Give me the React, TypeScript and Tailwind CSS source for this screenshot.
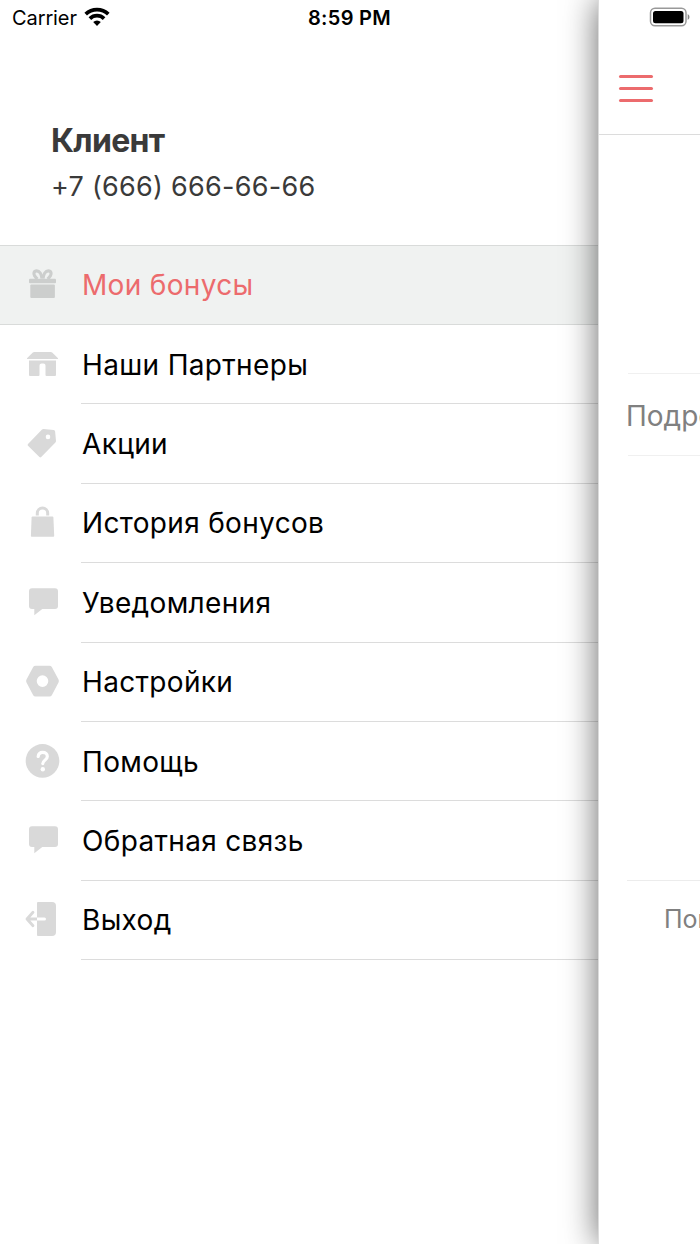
import React from "react";

interface MenuItem {
  id: string;
  label: string;
  icon: React.ReactNode;
}

const ChatIcon = () => (
  <path d="M8 3.3h23a3 3 0 0 1 3 3V21a3 3 0 0 1-3 3H18.3l-8 6.2V24H8a3 3 0 0 1-3-3V6.300a3 3 0 0 1 3-3z" />
);

const menuItems: MenuItem[] = [
  {
    id: "bonuses",
    label: "Мои бонусы",
    icon: (
      <>
        <g fill="none" stroke="currentColor" strokeWidth="3.200">
          <path d="M18 11.500C17.500 7.500 15.500 3.800 12.700 3.800C9.800 3.800 9.300 6.800 10.600 8.800C11.300 10 12 11 13.500 12" />
          <path d="M19 11.500C19.500 7.500 21.500 3.800 24.300 3.800C27.200 3.800 27.700 6.800 26.400 8.800C25.700 10 25 11 23.500 12" />
        </g>
        <rect x="5" y="11.700" width="27" height="4.600" rx="1" />
        <rect x="6.300" y="17.500" width="24.600" height="13.500" rx="1" />
      </>
    ),
  },
  {
    id: "partners",
    label: "Наши Партнеры",
    icon: (
      <>
        <path d="M10.200 5h16.600q.8 0 1.400.5L34 11.300v.7H3v-.7l5.800-5.800q.6-.5 1.400-.5z" />
        <path d="M5 13.500h27V28q0 1-1 1h-8.500q-1 0-1-1v-9.500q0-2-2-2h-2q-2 0-2 2V28q0 1-1 1H6q-1 0-1-1z" />
      </>
    ),
  },
  {
    id: "promo",
    label: "Акции",
    icon: (
      <path
        fillRule="evenodd"
        d="M19.500 3l10.200.9q1.300.1 1.400 1.400l.9 9.700q0 .8-.6 1.400L17.200 31q-.9.900-1.800 0L4 19.700q-.9-.9 0-1.800L18 3.600q.6-.6 1.500-.6zM24 8.600a2.300 2.300 0 1 0 0 4.600a2.300 2.300 0 0 0 0-4.600z"
      />
    ),
  },
  {
    id: "history",
    label: "История бонусов",
    icon: (
      <>
        <path
          d="M13.300 10.600V8.300a5.200 5.200 0 0 1 10.400 0v2.300"
          fill="none"
          stroke="currentColor"
          strokeWidth="3"
        />
        <path d="M8.500 11.600h20q.8 0 .9.900L30.200 31q0 .8-.8.8H7.700q-.8 0-.8-.8l.7-18.500q.1-.9.9-.9z" />
      </>
    ),
  },
  { id: "notifications", label: "Уведомления", icon: <ChatIcon /> },
  {
    id: "settings",
    label: "Настройки",
    icon: (
      <path
        fillRule="evenodd"
        d="M11.500 1.800h14q1.500 0 2.300 1.300l6.700 12.500q.8 1.500 0 3l-6.700 12.600q-.8 1.300-2.300 1.300h-14q-1.500 0-2.300-1.300L2.500 18.600q-.8-1.500 0-3L9.200 3.100q.8-1.300 2.300-1.300zM18.500 11.300a5.800 5.800 0 1 0 0 11.600a5.800 5.800 0 0 0 0-11.600z"
      />
    ),
  },
  {
    id: "help",
    label: "Помощь",
    icon: (
      <>
        <circle cx="18.500" cy="16.900" r="16.800" />
        <path
          d="M14.200 12.500c.3-2.600 2-4.100 4.500-4.100c2.700 0 4.600 1.600 4.600 4c0 3.600-4.500 3.800-4.500 7.200"
          fill="none"
          stroke="#fff"
          strokeWidth="3.200"
          strokeLinecap="round"
        />
        <circle cx="18.800" cy="25.200" r="2.200" fill="#fff" />
      </>
    ),
  },
  { id: "feedback", label: "Обратная связь", icon: <ChatIcon /> },
  {
    id: "logout",
    label: "Выход",
    icon: (
      <>
        <path d="M14 0h14a4 4 0 0 1 4 4v26a4 4 0 0 1-4 4H14q-1 0-1-1V1q0-1 1-1z" />
        <path
          d="M13 17H3M9 10.200L3 17l6 6.800"
          fill="none"
          stroke="currentColor"
          strokeWidth="2.800"
          strokeLinecap="round"
          strokeLinejoin="round"
        />
        <path d="M13 15.500h7.500a1.500 1.500 0 0 1 0 3H13z" fill="#fff" />
      </>
    ),
  },
];

const WifiIcon = () => (
  <svg className="w-[26px] h-[20px] mb-0.5" viewBox="0 0 26 20">
    <g fill="none" stroke="#000" strokeWidth="3.700">
      <path d="M1.700 7.200a16.300 16.300 0 0 1 22.600 0" />
      <path d="M5.900 11.600a10.200 10.200 0 0 1 14.200 0" />
    </g>
    <path d="M13 19l-3.800-3.900a5.400 5.400 0 0 1 7.600 0z" />
  </svg>
);

const BatteryIcon = () => (
  <svg className="w-[42px] h-[20px]" viewBox="0 0 42 20">
    <rect
      x="1.500"
      y="1.200"
      width="35.500"
      height="17.600"
      rx="4.500"
      fill="none"
      stroke="#999"
      strokeWidth="1.500"
    />
    <rect x="4" y="3.900" width="30.500" height="12.300" rx="2.500" />
    <path d="M38.700 7q1.800 1 1.800 3t-1.800 3z" fill="#888" />
  </svg>
);

const App = () => {
  return (
    <div className="flex w-[700px] h-[1244px] overflow-hidden bg-white font-['Inter','Liberation_Sans',sans-serif] text-black">
      {/* Drawer */}
      <aside className="w-[598px] shrink-0 flex flex-col">
        <div className="h-9 pl-3 flex items-center">
          <span className="w-[72px] text-[20px] leading-none tracking-[-0.1px]">
            Carrier
          </span>
          <WifiIcon />
          <span className="ml-[198px] text-[20px] leading-none font-semibold tracking-[0.3px] whitespace-nowrap">
            8:59 PM
          </span>
        </div>

        <div className="h-[209px] pl-[51px] pt-[85px] text-[#3a3a3a]">
          <h1 className="text-[32px] leading-10 font-bold tracking-[-0.7px]">
            Клиент
          </h1>
          <p className="mt-1.5 text-[27px] leading-10 tracking-[0.27px]">
            +7 (666) 666-66-66
          </p>
        </div>

        <nav className="flex flex-col">
          {menuItems.map((item, index) => (
            <div
              key={item.id}
              className={
                index === 0
                  ? "flex h-[80px] border-y border-[#d9dbda] bg-[#f0f2f1] text-[#ec6b6d]"
                  : "flex h-[79.4px]"
              }
            >
              <div className="w-[81px] pl-6 flex items-center shrink-0">
                <svg
                  className={
                    index === 0
                      ? "w-9 h-9 overflow-visible text-[#cccecd]"
                      : "w-9 h-9 overflow-visible text-[#d9d9d9]"
                  }
                  viewBox="0 0 36 36"
                  fill="currentColor"
                >
                  {item.icon}
                </svg>
              </div>
              <div
                className={
                  index === 0
                    ? "flex-1 pl-px flex items-center"
                    : "flex-1 pl-px pt-px flex items-center border-b border-[#dcdcdc]"
                }
              >
                <span className="text-[28px] leading-none tracking-[0.33px]">
                  {item.label}
                </span>
              </div>
            </div>
          ))}
        </nav>
      </aside>

      {/* Page pushed to the right */}
      <main className="relative w-[102px] shrink-0 flex flex-col bg-white border-l border-[#dcdcdc] shadow-[0_0_34px_rgba(0,0,0,0.6)] text-[#808080] whitespace-nowrap">
        <div className="h-[135px] border-b border-[#dcdcdc]">
          <div className="pl-[50px] pt-[7px]">
            <BatteryIcon />
          </div>
          <div className="ml-5 mt-[47.5px] w-[34px] flex flex-col gap-[9px]">
            <span className="h-[3px] rounded-full bg-[#ec6b6d]" />
            <span className="h-[3px] rounded-full bg-[#ec6b6d]" />
            <span className="h-[3px] rounded-full bg-[#ec6b6d]" />
          </div>
        </div>
        <div className="mt-[238px] ml-[29px] h-[83px] border-y border-[#f0f0f0] flex items-center">
          <span className="-ml-0.5 pt-0.5 text-[28px]">Подробнее</span>
        </div>
        <div className="mt-[424px] ml-7 h-[79px] border-t border-[#ececec] flex items-center">
          <span className="ml-[37px] text-[25px]">Показать</span>
        </div>
      </main>
    </div>
  );
};

export default App;
